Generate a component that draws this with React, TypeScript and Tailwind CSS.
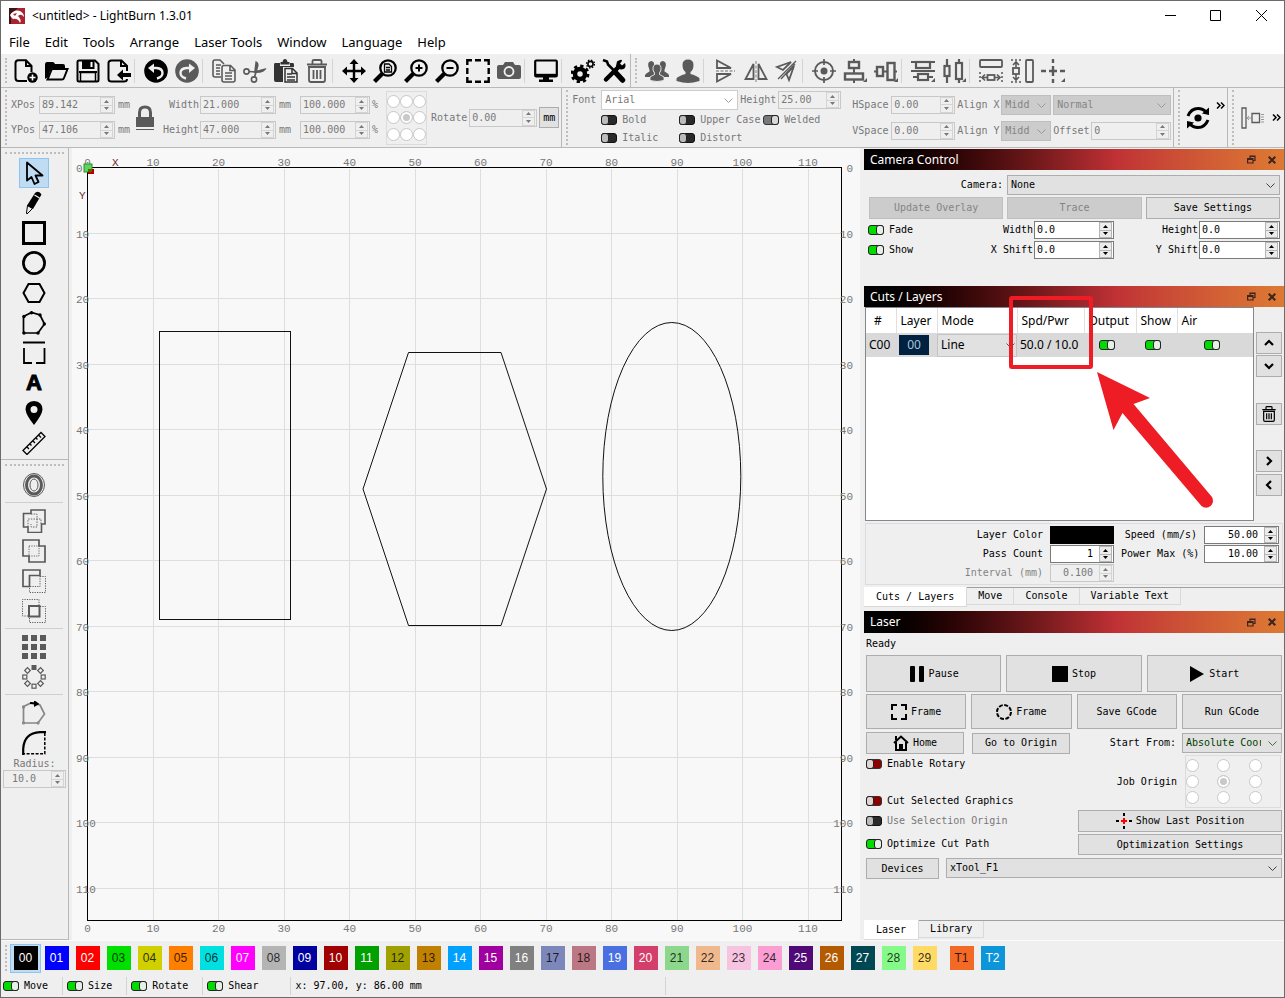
import type { ReactNode } from "react";

const MONO = "font-['DejaVu_Sans_Mono',monospace] text-[10px] leading-3";
const UI = "font-['Noto_Sans',sans-serif] text-[12px] leading-4";

function Ic({ children, size = 24, gray = false, vb = 24 }: { children: ReactNode; size?: number; gray?: boolean; vb?: number }) {
  return (
    <svg aria-hidden="true" width={size} height={size} viewBox={`0 0 ${vb} ${vb}`} fill="none" stroke="currentColor" strokeWidth="2" className={gray ? "shrink-0 text-[#5a5a5a]" : "shrink-0 text-black"}>
      {children}
    </svg>
  );
}

/* ---------- toolbar drawings ---------- */

const NewFile = <Ic><path d="M13 22H4.500Q1.500 22 1.500 19V4Q1.500 1.200 4.500 1.200H12L17.500 7V13M12 1.500V7H17" /><circle cx="18.500" cy="18.500" r="5.200" fill="currentColor" stroke="none" /><path d="M18.500 15.500v6M15.500 18.500h6" stroke="#fff" strokeWidth="1.600" /></Ic>;
const OpenFile = <Ic><path d="M0 20V6Q0 3 2 3H8Q9 3 10 5H18Q20 5 20 7V9H8L5 12L3 18Z" fill="currentColor" stroke="none" /><path d="M8 10H22.500L19 19Q18.500 20.500 17 20.500H2.500L6 12Q6.500 10 8 10Z" /></Ic>;
const Save = <Ic><path d="M1.500 3Q1.500 1.500 3 1.500H19L22.500 5V21Q22.500 22.500 21 22.500H3Q1.500 22.500 1.500 21Z" /><path d="M6 1H18.500V10H6ZM3 12H21V14H3Z" fill="currentColor" stroke="none" /><path d="M15.500 3V8" stroke="#fff" /><path d="M4.500 22V13.500H19.500V22" strokeWidth="1.500" /></Ic>;
const ImportFile = <Ic><path d="M20 12V7L14.500 1.500H4.500Q1.500 1.500 1.500 4V20Q1.500 22.500 4.500 22.500H17Q20 22.500 20 20M14 2V7H19.500" /><path d="M10 16L16 10.500V14H24V18H16V21.500Z" fill="currentColor" stroke="none" /></Ic>;
const undoPath = <><circle cx="12" cy="12" r="11.800" fill="currentColor" stroke="none" /><path d="M7 9H12.500Q18.500 9.500 18.500 14Q18.500 18 13 19.500" stroke="#efefef" strokeWidth="2.400" /><path d="M4 9L10 4.500V14Z" fill="#efefef" stroke="none" /></>;
const Undo = <Ic>{undoPath}</Ic>;
const Redo = <Ic gray><g transform="translate(24 0) scale(-1 1)">{undoPath}</g></Ic>;
const Copy = <Ic gray><path d="M9 18H3Q1 18 1 16V3Q1 1 3 1H8L12 5M4 6H9M4 9H8M4 12H8M4 15H8" strokeWidth="1.600" /><path d="M12 6.500H18.500L23 11V21Q23 23 21 23H12Q10 23 10 21V8.500Q10 6.500 12 6.500ZM18 7V11.500H23M13 14H20M13 17H20M13 20H20" strokeWidth="1.600" /></Ic>;
const Cut = <Ic gray><path d="M11 14L12.500 2Q16 3 15.500 7L13.500 14ZM12 12L23.500 9Q22 14 13 14Z" fill="currentColor" stroke="none" /><circle cx="3.500" cy="12.500" r="2.600" strokeWidth="1.600" /><circle cx="11" cy="20.500" r="2.600" strokeWidth="1.600" /><path d="M6 12.500L13 13L11.500 18" strokeWidth="1.700" /></Ic>;
const Paste = <Ic><path d="M1 4H6V7H16V4H19Q20 4 20 6V8H9V23H2Q0 23 0 21V6Q0 4 1 4Z" fill="#333" stroke="none" /><path d="M6.500 5.500V3H8.500Q9 0 11 0Q13 0 13.500 3H15.500V5.500Z" fill="#333" stroke="none" /><path d="M11 9.500H18.500L23 14V23H11ZM18 10V14.500H23M13 15H18M13 18H21M13 21H21" strokeWidth="1.500" stroke="#333" /></Ic>;
const trashPath = <><path d="M2 5.500H22M7.500 5V2Q7.500 1 9 1H15Q16.500 1 16.500 2V5M4 8V21Q4 23 6 23H18Q20 23 20 21V8M3 8H21" strokeWidth="1.800" /><path d="M8.500 11V20M12 11V20M15.500 11V20" strokeWidth="1.800" /></>;
const Trash = <Ic gray>{trashPath}</Ic>;
const Move = <Ic><path d="M12 3V21M3 12H21" strokeWidth="2.400" /><path d="M12 0L16.500 5H7.500ZM12 24L7.500 19H16.500ZM0 12L5 7.500V16.500ZM24 12L19 16.500V7.500Z" fill="currentColor" stroke="none" /></Ic>;
const lens = <><circle cx="15" cy="9" r="7.700" strokeWidth="2.300" /><path d="M9.500 14.500L1.500 22.500" strokeWidth="4.200" /></>;
const ZoomPage = <Ic>{lens}<path d="M11.500 5H16L18.500 7.500V13H11.500ZM13 8.500H17M13 11H17" strokeWidth="1.300" /></Ic>;
const ZoomIn = <Ic>{lens}<path d="M15 5.500V12.500M11.500 9H18.500" /></Ic>;
const ZoomOut = <Ic>{lens}<path d="M11.500 9H18.500" /></Ic>;
const SelectBox = <Ic><path d="M1.300 6V1.300H6M9 1.300H15M18 1.300H22.700V6M22.700 9V15M22.700 18V22.700H18M15 22.700H9M6 22.700H1.300V18M1.300 15V9" strokeWidth="2.400" /></Ic>;
const Camera = <Ic gray><path d="M2 6H6L8 3H16L18 6H22Q24 6 24 8V18Q24 20 22 20H2Q0 20 0 18V8Q0 6 2 6Z" fill="currentColor" stroke="none" /><circle cx="12" cy="12.500" r="4.500" stroke="#efefef" strokeWidth="1.800" /></Ic>;
const Monitor = <Ic><rect x="1.200" y="1.500" width="21.600" height="16" rx="1" strokeWidth="2.200" /><path d="M2 16H22" strokeWidth="2.400" /><path d="M9 18H15V20.500H19V23H5V20.500H9Z" fill="currentColor" stroke="none" /></Ic>;
const Gears = <Ic><circle cx="9" cy="15" r="5" strokeWidth="4.500" /><circle cx="9" cy="15" r="8" strokeWidth="2.800" strokeDasharray="3.200 3.080" /><circle cx="19.500" cy="5" r="2.600" strokeWidth="1.600" /><circle cx="19.500" cy="5" r="4" strokeWidth="1.300" strokeDasharray="1.500 1.640" /></Ic>;
const ToolsIcon = <Ic><path d="M4 20.500L17 7.500" strokeWidth="4.500" strokeLinecap="round" /><path d="M15 2.500Q20-.500 20 2L18 4.500L20 6.500L23 4Q25 10 19 10.500Q15 10 14 7Z" fill="currentColor" stroke="none" /><path d="M1 1L5 2.500L6 5.500L14 13.500" strokeWidth="2.500" /><path d="M14.500 14.500L20.500 21" strokeWidth="5.500" strokeLinecap="round" /></Ic>;
const User = <Ic gray><path d="M12 .500Q17.500 .500 17.500 6Q17.500 11 14.500 13V15Q22 17 23.500 19.500V22Q17 24 12 24Q7 24 .500 22V19.500Q2 17 9.500 15V13Q6.500 11 6.500 6Q6.500 .500 12 .500Z" fill="currentColor" stroke="none" /></Ic>;
const Users = <Ic gray><g fill="currentColor" stroke="none"><path d="M6 2Q10 2 9 8L8 10V12L10 14L8 18H0V16Q1 14 4.500 12.500V11Q1 3 6 2ZM18 2Q14 2 15 8L16 10V12L14 14L16 18H24V16Q23 14 19.500 12.500V11Q23 3 18 2Z" /><path d="M12 5Q16.500 5 16 11L14.500 14V15.500L19 18V21.500Q12 23.500 5 21.500V18L9.500 15.500V14L8 11Q7.500 5 12 5Z" stroke="#efefef" strokeWidth=".9" /></g></Ic>;
const FlipV = <Ic gray><path d="M4 1.500V9H18ZM4 22.500V15H18Z" strokeWidth="1.800" /><path d="M3 12H22" stroke="#999" strokeWidth="1.500" strokeDasharray="3 1.500" /></Ic>;
const FlipH = <Ic gray><path d="M9.500 5V20H1.500ZM14.500 5V20H22.500Z" strokeWidth="1.800" /><path d="M12 2V23" stroke="#999" strokeWidth="1.300" strokeDasharray="3 1.500" /></Ic>;
const Mirror = <Ic gray><path d="M16 3L2 8L8 11ZM19 7L14 21L11.500 15Z" strokeWidth="1.800" /><path d="M3 20L21 2M6 20L20 5" strokeWidth="1.300" /></Ic>;
const Target = <Ic gray><circle cx="12" cy="12" r="9" strokeWidth="1.900" /><circle cx="12" cy="12" r="3.500" fill="currentColor" stroke="none" /><path d="M12 0V6M12 18V24M0 12H6M18 12H24" strokeWidth="1.700" /></Ic>;
const corner = <path d="M24 19V23H20Z" fill="currentColor" stroke="none" />;
const AlignV = <Ic gray><rect x="6" y="3" width="10" height="6" strokeWidth="2.400" /><rect x="2" y="14.500" width="18" height="6" strokeWidth="2.400" /><path d="M11 0V3M11 9V14M11 21V24" />{corner}</Ic>;
const AlignH = <Ic gray><rect x="3" y="8" width="6" height="9" strokeWidth="2.400" /><rect x="13.500" y="4" width="7" height="17" strokeWidth="2.400" /><path d="M0 12.500H2M9 12.500H14M21 12.500H23" />{corner}</Ic>;
const DistV = <Ic gray><rect x="5" y="3" width="14" height="6" strokeWidth="2.200" /><rect x="7" y="15" width="10" height="6" strokeWidth="2.200" /><path d="M0 3H5M19 3H24M0 12H24M2 18H7M17 18H22" strokeWidth="2" />{corner}</Ic>;
const DistH = <Ic gray><rect x="2.500" y="7" width="5" height="10" strokeWidth="2.200" /><rect x="14" y="4" width="6" height="16" strokeWidth="2.200" /><path d="M5 0V7M5 17V24M17 0V4M17 20V24" strokeWidth="2.200" />{corner}</Ic>;
const SameW = <Ic gray><rect x="1" y="1" width="22" height="7" rx="1" strokeWidth="1.800" /><path d="M1 13V23M23 13V23" strokeDasharray="2 2" strokeWidth="1.500" /><rect x="8.500" y="16" width="7" height="5" strokeWidth="1.800" /><path d="M3 18.500H8M16 18.500H21M6 15.500L3 18.500L6 21.500M18 15.500L21 18.500L18 21.500" strokeWidth="1.600" /></Ic>;
const SameH = <Ic gray><rect x="16" y="1" width="7" height="22" rx="1" strokeWidth="1.800" /><path d="M1 1H11M1 23H11" strokeDasharray="2 2" strokeWidth="1.500" /><rect x="3" y="9" width="6" height="6" strokeWidth="1.800" /><path d="M6 3V8M6 15V21M3 6L6 3L9 6M3 18L6 21L9 18" strokeWidth="1.600" /></Ic>;
const CrossMove = <Ic gray><path d="M12 0V4M12 7V17M12 20V24M0 12H5M8 12H16M19 12H24" strokeWidth="2.400" />{corner}</Ic>;

/* ---------- side tools ---------- */

const Cursor = <Ic><path d="M5 1.500V19.500L9.500 16L12.500 23L16.500 21L13.500 14.500L20.500 14.500Z" strokeWidth="1.800" strokeLinejoin="round" /></Ic>;
const Pencil = <Ic><path d="M13 2Q17-1 19.500 3.500L11 18L5 14.500Z" fill="currentColor" stroke="none" /><path d="M5.500 14.500L10.500 17.500L5 23L4.500 22Z" strokeWidth="1" /><path d="M12.500 4L17.500 7" stroke="#efefef" strokeWidth="1.200" /></Ic>;
const SquareTool = <Ic><path d="M1.500 1.500H22.500V22.500H1.500Z" strokeWidth="3" /></Ic>;
const CircleTool = <Ic><circle cx="12" cy="12" r="10.600" strokeWidth="2.700" /></Ic>;
const HexTool = <Ic><path d="M6.500 3H17.500L22.500 12L17.500 21H6.500L1.500 12Z" /></Ic>;
const PolyTool = <Ic><path d="M1.500 5.500L9.500 1.500L18 4L22.500 13L16 22H1.500Z" strokeWidth="1.700" /><g fill="currentColor" stroke="none"><circle cx="2" cy="5.500" r="1.700" /><circle cx="9.500" cy="1.700" r="1.700" /><circle cx="18" cy="4" r="1.700" /><circle cx="22.300" cy="13" r="1.700" /><circle cx="16" cy="22" r="1.700" /><circle cx="2" cy="22" r="1.700" /></g></Ic>;
const DashTool = <Ic><path d="M1 1.500H23M2 7V22H10M22.500 7V22H14" strokeWidth="1.800" /></Ic>;
const TextTool = <span className="font-['Liberation_Sans',sans-serif] text-[22px] leading-6 font-bold [-webkit-text-stroke:1px_black]">A</span>;
const PinTool = <Ic><path fillRule="evenodd" d="M12 0Q20.500 .500 20.500 8.500Q20 14 12 24Q4 14 3.500 8.500Q3.500 .500 12 0ZM12 5A3.500 3.500 0 1 0 12 12A3.500 3.500 0 1 0 12 5Z" fill="currentColor" stroke="none" /></Ic>;
const RulerTool = <Ic><path d="M1 19.500L19 1.500L23 5.500L5 23.500ZM5 16L7 18M8 13L9.500 14.500M11 10L13 12M14 7L15.500 8.500M17 4.500L19 6.500" strokeWidth="1.300" /></Ic>;
const OffsetTool = <Ic gray><ellipse cx="12" cy="12" rx="10.500" ry="11.500" strokeWidth="1" /><ellipse cx="12" cy="12" rx="7.500" ry="9" strokeWidth="3" /><ellipse cx="12" cy="12" rx="4" ry="6" strokeWidth="1" /></Ic>;
const Weld = <Ic gray><path d="M9 1H23V15H19.500V23.500H6V18H1.500V4.500H9Z" strokeWidth="1.600" /><path d="M6 18V10H19V15M9 5H15V18H9V15" strokeWidth=".9" strokeDasharray="1.500 1.200" /></Ic>;
const Union = <Ic gray><path d="M1 1H17V7H23V23H7V17H1Z" strokeWidth="1.700" /><path d="M7 7H17V17H7Z" strokeWidth=".9" strokeDasharray="1.200 1.200" /></Ic>;
const Subtract = <Ic gray><path d="M1 1H18V6.500H7.500V17.500H1Z" strokeWidth="1.700" /><path d="M18 7.500H23.500V23.500H7.500V18M18 7V17.500H8" strokeWidth="1" strokeDasharray="1.200 1.200" /></Ic>;
const Intersect = <Ic gray><path d="M6 17H.500V.500H17V6M18 7.500H23.500V23.500H7.500V18" strokeWidth="1" strokeDasharray="1.200 1.200" /><path d="M7 7H17.500V17.500H7Z" /></Ic>;
const GridArr = <Ic gray><path d="M0 0h6v6H0zM9 0h6v6H9zM18 0h6v6h-6zM0 9h6v6H0zM9 9h6v6H9zM18 9h6v6h-6zM0 18h6v6H0zM9 18h6v6H9zM18 18h6v6h-6z" fill="currentColor" stroke="none" /></Ic>;
const RadialArr = (
  <Ic gray>
    <path d="M9.500 0h5v5h-5z" fill="currentColor" stroke="none" />
    {[45, 90, 135, 180, 225, 270, 315].map((a) => <rect key={a} x="10" y=".8" width="4" height="4" strokeWidth="1.200" transform={`rotate(${a} 12 12)`} />)}
  </Ic>
);
const StartPoint = <Ic gray><g stroke="#888"><path d="M1.500 5.500L9 2L18 4L22.500 13L16 22H1.500Z" strokeWidth="1.700" /><path d="M.500 21h2v2h-2zM15 21h2v2h-2zM.500 5h2v2h-2z" strokeWidth="1" /></g><path d="M8 2L14 2.500" stroke="#000" /><path d="M12-1L17.500 3L12 6Z" fill="#000" stroke="none" /></Ic>;
const RadiusTool = <Ic><path d="M1.200 24V18Q2 2 18 1.200H24" strokeWidth="2.200" /><path d="M22.800 2V22.800H1" strokeWidth="1.500" strokeDasharray="3 1.500" /></Ic>;

/* ---------- controls ---------- */

function Chevron({ className = "" }: { className?: string }) {
  return <svg aria-hidden="true" width="9" height="6" viewBox="0 0 9 6" fill="none" stroke="currentColor" className={className}><path d="M.5 .5L4.500 4.500L8.500 .5" /></svg>;
}

function Spin({ id, value, w = "w-full", off = false, right = false }: { id: string; value: string; w?: string; off?: boolean; right?: boolean }) {
  const shell = off ? "border-[#c8c8c8] bg-[#efefef] text-[#787878]" : "border-[#7a7a7a] bg-white text-black";
  const step = off ? "bg-[#efefef] border-[#d4d4d4]" : "bg-[#ebebeb] border-[#b4b4b4]";
  return (
    <span className={`flex h-[18px] shrink-0 border ${shell} ${w}`}>
      <input id={id} defaultValue={value} disabled={off} className={`min-w-0 flex-1 bg-transparent px-[2px] outline-none ${right ? "text-right" : ""} ${MONO}`} />
      <span className="ml-1 flex w-[14px] flex-col pr-px">
        <button type="button" aria-label="Increase" className={`flex flex-1 items-center justify-center border ${step}`}>
          <svg width="5" height="3" viewBox="0 0 5 3"><path d="M0 3L2.500 0L5 3Z" fill="currentColor" /></svg>
        </button>
        <button type="button" aria-label="Decrease" className={`flex flex-1 items-center justify-center border border-t-0 ${step}`}>
          <svg width="5" height="3" viewBox="0 0 5 3"><path d="M0 0L2.500 3L5 0Z" fill="currentColor" /></svg>
        </button>
      </span>
    </span>
  );
}

function Sel({ id, value, cls }: { id: string; value: string; cls: string }) {
  return (
    <span className={`relative flex h-5 min-w-0 border ${cls}`}>
      <select id={id} aria-label={id} className={`w-full min-w-0 appearance-none bg-transparent pl-[3px] pr-5 outline-none ${MONO}`}>
        <option>{value}</option>
      </select>
      <Chevron className="pointer-events-none absolute right-1 top-[7px] opacity-70" />
    </span>
  );
}

const TONES = {
  green: "border-[#222] bg-[#00dc00] before:right-[-1px] before:bg-[#e6f0e6]",
  red: "border-[#333] bg-[#8c0000] before:left-[-1px] before:bg-[#e0d4d4]",
  dark: "border-[#111] bg-[#2a2a2a] before:left-[-1px] before:bg-[#bcbcbc]",
  gray: "border-[#333] bg-[#787878] before:right-[-1px] before:bg-[#d8d8d8]",
};

function Toggle({ label, tone = "green", hide = false, muted = false }: { label: string; tone?: keyof typeof TONES; hide?: boolean; muted?: boolean }) {
  return (
    <label className={`flex items-center gap-[5px] whitespace-pre ${MONO} ${muted ? "text-[#787878]" : ""}`}>
      <input type="checkbox" aria-label={label} defaultChecked={tone === "green" || tone === "gray"} className={`relative h-[10px] w-4 shrink-0 appearance-none rounded-[3px] border before:absolute before:top-[-1px] before:h-[10px] before:w-2 before:rounded-[3px] before:border before:border-[#222] ${TONES[tone]}`} />
      {!hide && label}
    </label>
  );
}

function Nine({ name, cls }: { name: string; cls: string }) {
  return (
    <div role="radiogroup" aria-label={name} className={`grid border border-[#dcdcdc] ${cls}`}>
      {Array.from({ length: 9 }, (_, i) => (
        <input key={i} type="radio" name={name} aria-label={`${name} ${i + 1}`} disabled defaultChecked={i === 4} className="h-[13px] w-[13px] appearance-none rounded-full border border-[#c8c8c8] bg-white checked:bg-[#c8c8c8] checked:shadow-[inset_0_0_0_2px_#fff]" />
      ))}
    </div>
  );
}

function Btn({ children, cls = "", off = false }: { children: ReactNode; cls?: string; off?: boolean }) {
  return (
    <button type="button" disabled={off} className={`flex items-center justify-center gap-1 border whitespace-nowrap ${MONO} ${off ? "border-[#bfbfbf] bg-[#ccc] text-[#848484]" : "border-[#adadad] bg-[#e1e1e1]"} ${cls}`}>
      {children}
    </button>
  );
}

function Handle({ flat = false }: { flat?: boolean }) {
  return flat
    ? <div className="mx-1 h-0 border-t-2 border-dotted border-[#bdbdbd]" />
    : <div className="h-full w-0 border-l-2 border-dotted border-[#bdbdbd]" />;
}

function DockTitle({ title, cls = "h-[21px]" }: { title: string; cls?: string }) {
  return (
    <div className={`flex shrink-0 items-center bg-gradient-to-r from-black via-[#c03135] via-60% to-[#dd7a33] px-[6px] text-white ${UI} ${cls}`}>
      <h2 className="flex-1">{title}</h2>
      <button type="button" aria-label={`Float ${title}`} className="mr-3">
        <svg width="9" height="9" viewBox="0 0 9 9" fill="none" stroke="#3a2520" strokeWidth="1.200"><path d="M3 3V1H8V5.500H6M.6 3.500H6V8H.6ZM.6 4.500H6M3 1.500H8" /></svg>
      </button>
      <button type="button" aria-label={`Close ${title}`} className="mr-[2px]">
        <svg width="8" height="8" viewBox="0 0 8 8" stroke="#3a2520" strokeWidth="2"><path d="M.7 .7L7.300 7.300M7.300 .7L.7 7.300" /></svg>
      </button>
    </div>
  );
}

function Tabs({ items, active }: { items: string[]; active: string }) {
  return (
    <div role="tablist" className="flex h-5 shrink-0 border-t border-[#a0a0a0]">
      {items.map((t) => (
        <button key={t} type="button" role="tab" aria-selected={t === active} className={`border-r border-[#d9d9d9] ${MONO} ${t === active ? "-mt-px border-b bg-white px-3" : "mb-[2px] border-b px-[11px]"}`}>{t}</button>
      ))}
    </div>
  );
}

type Tool = [string, ReactNode] | null;

const MAIN_TOOLS: Tool[] = [
  ["New", NewFile], ["Open", OpenFile], ["Save", Save], ["Import", ImportFile], null,
  ["Undo", Undo], ["Redo", Redo], null,
  ["Copy", Copy], ["Cut", Cut], ["Paste", Paste], ["Delete", Trash], null,
  ["Pan", Move], ["Zoom to page", ZoomPage], ["Zoom in", ZoomIn], ["Zoom out", ZoomOut], ["Frame selection", SelectBox], ["Camera", Camera], null,
  ["Preview", Monitor], null, ["Settings", Gears], ["Device settings", ToolsIcon],
];
const ARRANGE_TOOLS: Tool[] = [
  ["Group", Users], ["Ungroup", User], null,
  ["Flip vertical", FlipV], ["Flip horizontal", FlipH], ["Mirror", Mirror], null,
  ["Center", Target], ["Align vertical", AlignV], ["Align horizontal", AlignH], null,
  ["Distribute vertical", DistV], ["Distribute horizontal", DistH], null,
  ["Same width", SameW], ["Same height", SameH], ["Move to", CrossMove],
];
const DRAW_TOOLS: Tool[] = [
  ["Select", Cursor], ["Draw lines", Pencil], ["Rectangle", SquareTool], ["Ellipse", CircleTool], ["Polygon", HexTool],
  ["Edit nodes", PolyTool], ["Tabs", DashTool], ["Text", TextTool], ["Position laser", PinTool], ["Measure", RulerTool],
];
const EDIT_TOOLS: Tool[] = [
  ["Offset", OffsetTool], null, ["Weld", Weld], ["Union", Union], ["Subtract", Subtract], ["Intersection", Intersect], null,
  ["Grid array", GridArr], ["Circular array", RadialArr], null, ["Start point", StartPoint], ["Radius", RadiusTool],
];

function ToolRow({ tools }: { tools: Tool[] }) {
  return (
    <div className="flex items-center">
      {tools.map((t, i) => t
        ? <button key={i} type="button" aria-label={t[0]} className="flex w-[31px] justify-center">{t[1]}</button>
        : <span key={i} className="mr-[5px] h-6 w-px bg-[#d4d4d4]" />)}
    </div>
  );
}

function ToolColumn({ tools, active }: { tools: Tool[]; active?: string }) {
  return (
    <div className="flex flex-col items-center pr-px">
      {tools.map((t, i) => t
        ? <button key={i} type="button" aria-label={t[0]} className={`flex h-[30px] w-[30px] items-center justify-center border ${t[0] === active ? "border-[#8ec5f0] bg-[#bfdcf3]" : "border-transparent"}`}>{t[1]}</button>
        : <span key={i} className="mt-[2px] mb-[3px] h-px w-[58px] bg-[#cfcfcf]" />)}
    </div>
  );
}

/* ---------- work area ---------- */

const STEPS = Array.from({ length: 12 }, (_, i) => i * 10);

function Workspace() {
  return (
    <svg role="img" aria-label="Work area" viewBox="0 0 788 789" preserveAspectRatio="xMinYMin meet" className="h-full w-full font-['Liberation_Mono',monospace] text-[11px]">
      {STEPS.slice(1).map((n) => {
        const p = Math.round(n * 6.55);
        return <path key={n} d={`M${15.500 + p} 18V770M17 ${16.500 + p}H769`} stroke="#dedede" />;
      })}
      <rect x="15.500" y="16.500" width="754" height="753" fill="none" stroke="#000" />
      <g fill="#777">
        {STEPS.map((n) => {
          const p = n * 6.550;
          return (
            <g key={n}>
              <text x={15.500 + p} y="15" textAnchor="middle">{n}</text>
              <text x={15.500 + p} y="781" textAnchor="middle">{n}</text>
              <text x="4" y={21 + p}>{n}</text>
              <text x="781" y={21 + p} textAnchor="end">{n}</text>
            </g>
          );
        })}
      </g>
      <g fill="#6b2a2a"><text x="40" y="15">X</text><text x="7" y="48">Y</text></g>
      <rect x="12" y="13" width="8" height="8" fill="#5cd65c" stroke="#2c8a2c" />
      <path d="M16 18H22V23H16Z" fill="#b00000" /><path d="M16 18H20V21H16Z" fill="#5a6a00" />
      <g fill="none" stroke="#111">
        <rect x="87.500" y="180.500" width="131" height="288" />
        <path d="M336.500 201.500H429L474.500 338L429 474.500H336.500L291 338Z" />
        <ellipse cx="599.800" cy="325.500" rx="69" ry="154" />
      </g>
    </svg>
  );
}

/* ---------- palette ---------- */

const PALETTE: [string, string, boolean][] = [
  ["00", "#000000", true], ["01", "#0000ff", true], ["02", "#ff0000", true], ["03", "#00e000", false], ["04", "#d0d000", false],
  ["05", "#ff8000", false], ["06", "#00e0e0", false], ["07", "#ff00ff", true], ["08", "#b4b4b4", false], ["09", "#0000a0", true],
  ["10", "#a00000", true], ["11", "#00a000", true], ["12", "#a0a000", false], ["13", "#c08000", false], ["14", "#00a0ff", true],
  ["15", "#a000a0", true], ["16", "#808080", true], ["17", "#7d87b9", false], ["18", "#bb7784", false], ["19", "#4a6fe3", true],
  ["20", "#d33f6a", true], ["21", "#8cd78c", false], ["22", "#f0b98d", false], ["23", "#f6c4e1", false], ["24", "#fa9ed4", false],
  ["25", "#500a78", true], ["26", "#b45a00", true], ["27", "#004754", true], ["28", "#86fa88", false], ["29", "#ffdb66", false],
  ["T1", "#f36926", false], ["T2", "#0c96d9", true],
];

function Frame3({ d }: { d: string }) {
  return <Ic size={16} vb={16}><path d={d} /></Ic>;
}

function Shape() {
  return (
    <section aria-label="Shape" className="flex items-center text-[#787878]">
      <div className="grid grid-cols-[27px_76px_auto] items-center gap-x-[1px] gap-y-[7px]">
        <label htmlFor="xpos">XPos</label><Spin id="xpos" value="89.142" off /><span className="pl-[2px]">mm</span>
        <label htmlFor="ypos">YPos</label><Spin id="ypos" value="47.106" off /><span className="pl-[2px]">mm</span>
      </div>
      <button type="button" aria-label="Lock aspect ratio" className="ml-[3px] w-6">
        <svg width="20" height="26" viewBox="0 0 20 26" className="mx-auto"><path d="M4.500 13V7.500Q4.500 2 10 2Q15.500 2 15.500 7.500V13" fill="none" stroke="#5a5a5a" strokeWidth="3" /><path d="M1 12H19V22H1ZM1 24H19V25H1Z" fill="#5a5a5a" /></svg>
      </button>
      <div className="ml-[5px] grid grid-cols-[37px_76px_22px_70px_auto] items-center gap-x-[1px] gap-y-[7px]">
        <label htmlFor="sw" className="text-right">Width</label><Spin id="sw" value="21.000" off /><span className="pl-[2px]">mm</span><Spin id="swp" value="100.000" off /><span className="pl-px">%</span>
        <label htmlFor="sh" className="text-right">Height</label><Spin id="sh" value="47.000" off /><span className="pl-[2px]">mm</span><Spin id="shp" value="100.000" off /><span className="pl-px">%</span>
      </div>
      <Nine name="Anchor" cls="ml-2 h-[54px] w-[41px] grid-cols-3 place-content-between py-[3px]" />
      <label htmlFor="rot" className="mr-[2px] ml-1">Rotate</label>
      <Spin id="rot" value="0.00" w="w-[68px]" off />
      <Btn cls="ml-[2px] h-[21px] w-5 text-black">mm</Btn>
    </section>
  );
}

function TextBar() {
  return (
    <section aria-label="Text" className="flex flex-col gap-1 text-[#787878]">
      <div className="flex items-center">
        <label htmlFor="Font" className="w-[29px]">Font</label>
        <div className="w-[137px]"><Sel id="Font" value="Arial" cls="border-[#ccc] bg-white" /></div>
        <label htmlFor="th" className="mx-[2px]">Height</label>
        <Spin id="th" value="25.00" w="w-[63px]" off />
      </div>
      <div className="ml-[29px] grid w-max grid-cols-[78px_84px_auto] gap-y-[6px]">
        <Toggle label="Bold" tone="dark" /><Toggle label="Upper Case" tone="dark" /><Toggle label="Welded" tone="gray" />
        <Toggle label="Italic" tone="dark" /><Toggle label="Distort" tone="dark" />
      </div>
    </section>
  );
}

function Spacing() {
  const dis = "border-[#bfbfbf] bg-[#ccc] text-[#848484]";
  return (
    <section aria-label="Spacing" className="grid grid-cols-[37px_64px_42px_50px_36px_80px] items-center gap-x-[2px] gap-y-[6px] whitespace-nowrap text-[#787878]">
      <label htmlFor="hs">HSpace</label><Spin id="hs" value="0.00" off /><label htmlFor="ax">Align X</label><Sel id="ax" value="Middle" cls={dis} />
      <div className="col-span-2"><Sel id="style" value="Normal" cls={dis} /></div>
      <label htmlFor="vs">VSpace</label><Spin id="vs" value="0.00" off /><label htmlFor="ay">Align Y</label><Sel id="ay" value="Middle" cls={dis} />
      <label htmlFor="off">Offset</label><Spin id="off" value="0" off />
    </section>
  );
}

function CameraPanel() {
  return (
    <section className="shrink-0">
      <DockTitle title="Camera Control" />
      <div className="flex flex-col gap-[2px] pt-[5px] pr-1 pb-[27px] pl-1">
        <div className="grid grid-cols-[1fr_273px] items-center gap-1">
          <label htmlFor="Camera" className="text-right">Camera:</label>
          <Sel id="Camera" value="None" cls="border-[#adadad] bg-[#e1e1e1]" />
        </div>
        <div className="grid grid-cols-3 gap-1 pl-px">
          <Btn off cls="h-[22px]">Update Overlay</Btn><Btn off cls="h-[22px]">Trace</Btn><Btn cls="h-[22px]">Save Settings</Btn>
        </div>
        {[["Fade", "Width", "Height"], ["Show", "X Shift", "Y Shift"]].map(([t, a, b]) => (
          <div key={t} className="grid grid-cols-[1fr_auto_80px_83px_81px] items-center gap-x-[1px]">
            <Toggle label={t} />
            <label htmlFor={a}>{a}</label><Spin id={a} value="0.0" />
            <label htmlFor={b} className="text-right">{b}</label><Spin id={b} value="0.0" />
          </div>
        ))}
      </div>
    </section>
  );
}

function SideBtn({ label, d, cls = "" }: { label: string; d: string; cls?: string }) {
  return <Btn cls={`h-[22px] ${cls}`}><svg role="img" aria-label={label} width="10" height="10" viewBox="0 0 10 10" fill="none" stroke="#000" strokeWidth="2.200"><path d={d} /></svg></Btn>;
}

function CutsPanel() {
  const th = "border-r border-[#e0e0e0] px-1 text-left font-normal";
  return (
    <section className="relative shrink-0">
      <DockTitle title="Cuts / Layers" />
      <div className="flex gap-[2px] pr-[2px] pl-px">
        <div className="h-[214px] flex-1 border border-[#828790] bg-white">
          <table className={`w-full table-fixed border-collapse ${UI}`}>
            <colgroup><col className="w-[30px]" /><col className="w-[41px]" /><col className="w-[80px]" /><col className="w-[67px]" /><col className="w-[52px]" /><col className="w-[41px]" /><col /></colgroup>
            <thead>
              <tr className="h-[25px]"><th className={`${th} pl-2`}>#</th><th className={th}>Layer</th><th className={th}>Mode</th><th className={th}>Spd/Pwr</th><th className={th}>Output</th><th className={th}>Show</th><th className="px-1 text-left font-normal">Air</th></tr>
            </thead>
            <tbody>
              <tr className="h-6 bg-[#d9d9d9]">
                <td className="pl-[3px]">C00</td>
                <td className="px-[3px]"><span className="block h-5 w-[30px] bg-[#002240] text-center leading-5 text-[#a9c4dc]">00</span></td>
                <td>
                  <span className="relative block">
                    <select aria-label="Mode" className="block h-[23px] w-full appearance-none border border-[#c4c4c4] bg-[#e1e1e1] pl-[3px]"><option>Line</option></select>
                    <Chevron className="pointer-events-none absolute top-[9px] right-[2px] opacity-60" />
                  </span>
                </td>
                <td className="pl-[3px] whitespace-nowrap">50.0 / 10.0</td>
                <td className="pl-[15px]"><Toggle label="Output" hide /></td>
                <td className="pl-[9px]"><Toggle label="Show layer" hide /></td>
                <td className="pl-[27px]"><Toggle label="Air" hide /></td>
              </tr>
            </tbody>
          </table>
        </div>
        <div className="flex w-[26px] flex-col pt-[25px]">
          <SideBtn label="Move up" d="M1 7L5 3L9 7" />
          <SideBtn label="Move down" d="M1 3L5 7L9 3" cls="mt-[1px]" />
          <Btn cls="mt-[26px] h-[22px]"><Ic size={16}>{trashPath}</Ic></Btn>
          <SideBtn label="Next" d="M3 1L7 5L3 9" cls="mt-[25px]" />
          <SideBtn label="Previous" d="M7 1L3 5L7 9" cls="mt-[2px]" />
        </div>
      </div>
      <div className="mt-[2px] mr-px ml-px grid grid-cols-[1fr_64px_76px_75px] items-center gap-x-[7px] gap-y-px border border-[#dcdcdc] py-[2px] pr-[3px] text-right whitespace-nowrap">
        <span>Layer Color</span><button type="button" aria-label="Layer Color" className="h-[18px] bg-black" /><label htmlFor="sp">Speed (mm/s)</label><Spin id="sp" value="50.00" right />
        <label htmlFor="pc">Pass Count</label><Spin id="pc" value="1" right /><label htmlFor="pm">Power Max (%)</label><Spin id="pm" value="10.00" right />
        <label htmlFor="iv" className="text-[#848484]">Interval (mm)</label><Spin id="iv" value="0.100" right off />
      </div>
      <div className="mt-[2px]"><Tabs items={["Cuts / Layers", "Move", "Console", "Variable Text"]} active="Cuts / Layers" /></div>
      <svg aria-hidden="true" width="210" height="230" viewBox="0 0 210 230" className="pointer-events-none absolute top-[8px] left-[143px]">
        <rect x="4" y="4" width="80" height="69" rx="1" fill="none" stroke="#ee1c25" strokeWidth="4" />
        <path d="M90 78L143 104L126.500 110L205 203A7 7 0 0 1 194.500 212L115.500 119L106.500 136Z" fill="#ee1c25" />
      </svg>
    </section>
  );
}

function LaserPanel() {
  return (
    <section className="flex flex-1 flex-col pt-1">
      <DockTitle title="Laser" cls="h-[22px]" />
      <div className="flex flex-1 flex-col pr-[2px] pl-[2px]">
        <p className="flex h-[22px] items-center">Ready</p>
        <div className="grid grid-cols-3 gap-[5px]">
          <Btn cls="h-[37px]"><Ic size={16} vb={16}><rect x="1" y="0" width="5" height="16" rx="1" fill="#000" stroke="none" /><rect x="10" y="0" width="5" height="16" rx="1" fill="#000" stroke="none" /></Ic>Pause</Btn>
          <Btn cls="h-[37px]"><Ic size={16} vb={16}><path d="M0 0H16V16H0Z" fill="#000" stroke="none" /></Ic>Stop</Btn>
          <Btn cls="h-[37px]"><Ic size={16} vb={16}><path d="M1 0L15 8L1 16Z" fill="#000" stroke="none" /></Ic>Start</Btn>
        </div>
        <div className="mt-[2px] grid grid-cols-4 gap-[5px]">
          <Btn cls="h-[35px]"><Frame3 d="M1 6V1H6M10 1H15V6M15 10V15H10M6 15H1V10" />Frame</Btn>
          <Btn cls="h-[35px]"><Ic size={16} vb={16}><circle cx="8" cy="8" r="7" strokeDasharray="4 1.500" /></Ic>Frame</Btn>
          <Btn cls="h-[35px]">Save GCode</Btn><Btn cls="h-[35px]">Run GCode</Btn>
        </div>
        <div className="mt-[3px] flex items-center">
          <Btn cls="h-[22px] w-[98px]"><Ic size={16} vb={16}><path d="M1 8L8 1.500L15 8M3 7V15H13V7M3 1V5" /><path d="M6 9H10V15H6Z" fill="#000" stroke="none" /></Ic>Home</Btn>
          <Btn cls="ml-2 h-[21px] w-[98px]">Go to Origin</Btn>
          <label htmlFor="StartFrom" className="mr-[6px] flex-1 text-right">Start From:</label>
          <div className="w-[100px]"><Sel id="StartFrom" value="Absolute Coords" cls="border-[#adadad] bg-[#e1e1e1] text-[#003c00]" /></div>
        </div>
        <div className="mt-px grid grid-cols-[1fr_204px]">
          <div className="flex h-[55px] flex-col justify-between py-[3px]"><Toggle label="Enable Rotary" tone="red" /><Toggle label="Cut Selected Graphics" tone="red" /></div>
          <div className="flex h-[53px] items-center justify-end gap-2 pr-px"><span>Job Origin</span><Nine name="Job Origin" cls="h-[53px] w-24 grid-cols-[31px_32px_auto] content-between py-[3px]" /></div>
          <Toggle label="Use Selection Origin" tone="dark" muted />
          <Btn cls="h-[22px]"><Ic size={16} vb={16}><path d="M8 0V3M8 13V16M0 8H3M13 8H16" /><path d="M8 5V11M5 8H11" stroke="red" strokeWidth="2" /></Ic>Show Last Position</Btn>
          <Toggle label="Optimize Cut Path" /><Btn cls="mt-[2px] h-[21px]">Optimization Settings</Btn>
        </div>
        <div className="mt-[3px] flex gap-[7px]">
          <Btn cls="h-[21px] w-[73px]">Devices</Btn>
          <div className="flex-1"><Sel id="Device" value="xTool_F1" cls="border-[#adadad] bg-[#e1e1e1]" /></div>
        </div>
      </div>
      <Tabs items={["Laser", "Library"]} active="Laser" />
    </section>
  );
}

export default function App() {
  return (
    <div className={`flex min-h-screen w-full flex-col border border-[#6b6b6b] bg-[#efefef] text-black ${MONO}`}>
      <header className={`bg-white ${UI}`}>
        <div className="flex h-[29px] items-center pl-2">
          <svg aria-hidden="true" width="16" height="16" viewBox="0 0 16 16"><path d="M0 0H16V16H0Z" fill="#a82430" /><path d="M0 0H9L2 6V16H0Z" fill="#3c1418" /><path d="M1 7Q5 1 11 3Q15 5 15 9Q12 5 9 8Q13 12 11 15Q9 10 4 11L2 9Z" fill="#fff" /><path d="M4 6L8 5L6 8Z" fill="#a82430" /></svg>
          <h1 className="ml-[7px] flex-1">&lt;untitled&gt; - LightBurn 1.3.01</h1>
          <button type="button" aria-label="Minimize" className="flex w-[45px] justify-center"><svg width="11" height="11" stroke="#000"><path d="M0 5.500H11" /></svg></button>
          <button type="button" aria-label="Maximize" className="flex w-[45px] justify-center"><svg width="11" height="11" stroke="#000" fill="none"><path d="M.5 .5H10.500V10.500H.5Z" /></svg></button>
          <button type="button" aria-label="Close" className="flex w-[46px] justify-center"><svg width="11" height="11" stroke="#000"><path d="M0 0L11 11M11 0L0 11" /></svg></button>
        </div>
        <nav className="flex h-6 items-center gap-[15px] pl-2 text-[13px]">
          {["File", "Edit", "Tools", "Arrange", "Laser Tools", "Window", "Language", "Help"].map((m) => <button key={m} type="button">{m}</button>)}
        </nav>
      </header>

      <div className="flex h-[34px] border-b border-[#b9b9b9]">
        <div className="flex gap-[3px] border-r border-[#b9b9b9] py-1 pr-px pl-1"><Handle /><ToolRow tools={MAIN_TOOLS} /></div>
        <div className="flex gap-1 py-1 pl-1"><Handle /><ToolRow tools={ARRANGE_TOOLS} /></div>
      </div>

      <div className="flex h-[60px] border-b border-[#b9b9b9]">
        <div className="flex gap-1 border-r border-[#b9b9b9] py-[2px] pr-[2px] pl-1"><Handle /><Shape /></div>
        <div className="flex flex-1 gap-1 py-[2px] pl-1"><Handle /><TextBar /><div className="ml-[7px] flex items-center"><Spacing /></div></div>
        <div className="flex gap-[6px] border-x border-[#b9b9b9] py-[2px] pr-[2px] pl-1">
          <Handle />
          <button type="button" aria-label="Refresh" className="self-center"><Ic><path d="M2 10Q5 2.500 12 2.500Q17 2.500 20 6M22 14Q19 21.500 12 21.500Q7 21.500 4 18" strokeWidth="3" /><path d="M23 1.500V9L16 7.500ZM1 22.500V15L8 16.500Z" fill="currentColor" stroke="none" /><circle cx="12" cy="12" r="3.600" fill="currentColor" stroke="none" /></Ic></button>
          <button type="button" aria-label="More" className="mt-3 self-start"><svg width="9" height="7" fill="none" stroke="#000" strokeWidth="1.500"><path d="M1 .5L4 3.500L1 6.500M5 .5L8 3.500L5 6.500" /></svg></button>
        </div>
        <div className="flex items-center gap-[7px] py-[2px] pr-[3px] pl-1">
          <Handle />
          <button type="button" aria-label="Dock left"><Ic gray><path d="M1 2H5V22H1ZM11 7.500H18.500V16.500H11Z" strokeWidth="1.300" /><path d="M10 12H6M8 10L6 12L8 14M20 8.500H23M20 11H23M20 13.500H23M20 16H23" strokeWidth="1" stroke="#999" /></Ic></button>
          <button type="button" aria-label="More tools"><svg width="9" height="7" fill="none" stroke="#000" strokeWidth="1.500"><path d="M1 .5L4 3.500L1 6.500M5 .5L8 3.500L5 6.500" /></svg></button>
        </div>
      </div>

      <main className="flex flex-1">
        <aside className="flex w-[68px] shrink-0 flex-col border-r border-b border-[#b9b9b9]">
          <div className="border-b border-[#b9b9b9] pt-1 pb-px"><Handle flat /><div className="mt-1"><ToolColumn tools={DRAW_TOOLS} active="Select" /></div></div>
          <div className="pt-1"><Handle flat /><div className="mt-1"><ToolColumn tools={EDIT_TOOLS} /></div></div>
          <label htmlFor="radius" className="text-center text-[#787878]">Radius:</label>
          <div className="px-[2px]"><Spin id="radius" value=" 10.0" off /></div>
        </aside>
        <div className="ml-[3px] min-w-0 flex-1 bg-[#f8f8f8] pt-[3px]"><Workspace /></div>
        <div className="ml-1 flex w-[420px] shrink-0 flex-col pt-px"><CameraPanel /><CutsPanel /><LaserPanel /></div>
      </main>

      <div className="flex h-[35px] items-center gap-[3px] border-t border-[#fafafa] pl-1">
        <div className="h-[26px]"><Handle /></div>
        <div className="flex font-['Liberation_Sans',sans-serif] text-[12px]">
          {PALETTE.map(([n, color, light]) => (
            <button key={n} type="button" className={`flex h-[29px] w-[31px] items-center justify-center border ${n === "00" ? "border-[#8ec5f0] bg-[#bfdcf3]" : "border-transparent"} ${n === "T1" ? "ml-[6px]" : ""}`}>
              <span className={`flex h-6 w-6 items-center justify-center ${light ? "text-white" : "text-black/80"}`} style={{ backgroundColor: color }}>{n}</span>
            </button>
          ))}
        </div>
      </div>

      <footer className="flex h-[22px] items-center gap-1 pl-[2px]">
        {["Move", "Size", "Rotate", "Shear"].map((t) => <div key={t} className={`flex h-[18px] items-center border-r border-[#d4d4d4] ${t === "Shear" ? "pr-8" : "pr-[14px]"}`}><Toggle label={t} /></div>)}
        <output className="flex h-[18px] w-[371px] items-center border-r border-[#d4d4d4] whitespace-pre">x: 97.00, y: 86.00 mm</output>
      </footer>
    </div>
  );
}
